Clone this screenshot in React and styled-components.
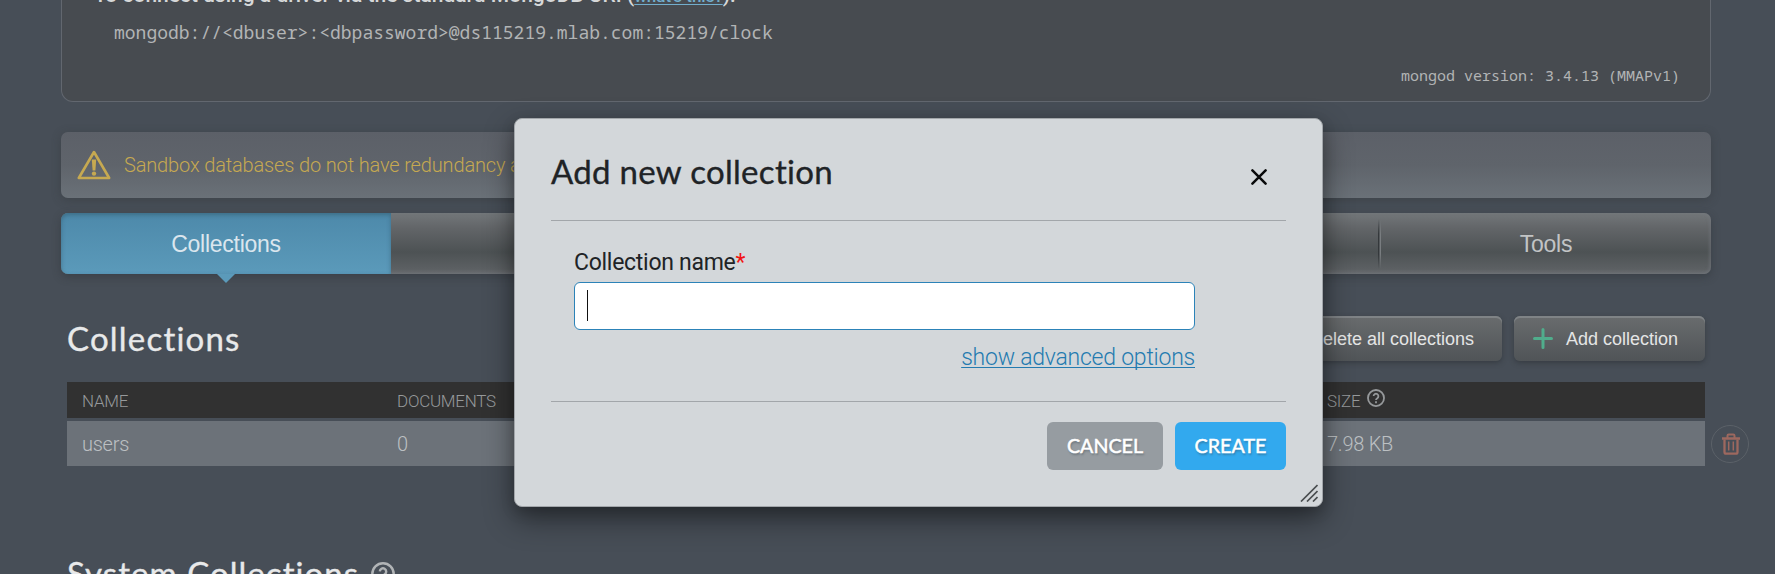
import React from "react";
import styled, { createGlobalStyle, css } from "styled-components";

const GlobalStyle = createGlobalStyle`
  * { box-sizing: border-box; }
  html, body { margin: 0; height: 574px; overflow: hidden; background: #474e57; }
  body { font-family: Roboto, "Liberation Sans", sans-serif; color: #dcdedf; }
`;

const Page = styled.main`
  height: 574px;
  padding: 0 64px 0 61px;
  overflow: hidden;
  display: flex;
  flex-direction: column;
  background: #474e57;
`;

const ConnectPanel = styled.section`
  flex: none;
  height: 102px;
  border: 1px solid #62676f;
  border-top: 0;
  border-radius: 0 0 12px 12px;
  background: #474b50;
  padding: 0 30px 0 32px;
  font-weight: 500;
`;

const Hint = styled.p`
  margin: -19px 0 0;
  height: 31px;
  line-height: 28px;
  font-size: 21px;
  white-space: nowrap;
  color: #d6d8d9;
`;

const HintLink = styled.a`
  color: #72aecd;
  font-size: 17px;
  text-decoration: underline;
  text-decoration-thickness: 1px;
  text-underline-offset: 2px;
`;

const Code = styled.code`
  display: block;
  font-family: "Droid Sans Mono", "Noto Sans Mono", "DejaVu Sans Mono", monospace;
  font-weight: 400;
  font-size: ${(p) => (p.$small ? 15 : 18)}px;
  line-height: 24px;
  color: #b2b4b5;
  white-space: nowrap;
  ${(p) => (p.$small ? css`text-align: right; margin-top: 19px;` : css`margin: 8px 0 0 20px;`)}
`;

const Alert = styled.section`
  flex: none;
  margin-top: 30px;
  height: 66px;
  border-radius: 7px;
  padding: 0 16px;
  display: flex;
  align-items: center;
  gap: 13px;
  background: linear-gradient(#5c6068, #5f646b 50%, #6a7178);
  box-shadow: 0 2px 10px rgba(50, 55, 58, 0.45);
  color: #c6a951;
  font-size: 20px;
  font-weight: 300;
  letter-spacing: -0.15px;
  white-space: nowrap;
`;

const Tabs = styled.nav`
  flex: none;
  margin-top: 15px;
  height: 61px;
  display: grid;
  grid-template-columns: repeat(5, 1fr);
  border-radius: 7px;
  background: linear-gradient(#73777a, #626568 25%, #4d5254 64%, #5c6063 92%, #6b6f74);
  box-shadow: 0 3px 8px rgba(40, 44, 48, 0.4), inset -2px 0 3px rgba(115, 120, 125, 0.5);
`;

const Tab = styled.div`
  position: relative;
  display: flex;
  align-items: center;
  justify-content: center;
  padding-top: 2px;
  font-family: "Liberation Sans", Arial, sans-serif;
  font-size: 23px;
  letter-spacing: -0.25px;
  color: #c2c4c5;
  ${(p) => p.$divider && css`
    &::before {
      content: "";
      position: absolute;
      left: -3px;
      top: 6px;
      bottom: 5px;
      width: 3px;
      background: linear-gradient(90deg, #34383b 0 1px, #55595c 1px 2px, #797d80 2px);
      mask-image: linear-gradient(transparent, #000 30%, #000 70%, transparent);
    }
  `}
  ${(p) => p.$active && css`
    color: #dbe6ee;
    border-radius: 7px 0 0 7px;
    background: linear-gradient(#4d89aa, #5b9aba);
    box-shadow: inset 0 2px 4px rgba(50, 90, 110, 0.6);
    &::after {
      content: "";
      position: absolute;
      top: 100%;
      left: 156px;
      border: 9px solid transparent;
      border-top-color: #5b9aba;
      border-bottom: 0;
    }
  `}
`;

const SectionHead = styled.header`
  flex: none;
  margin: 42px 6px 0;
  height: 45px;
  display: flex;
  align-items: center;
  gap: 12px;
`;

const Heading = styled.h2`
  margin: -1px 0 0;
  font-family: Lato, "Open Sans", sans-serif;
  font-weight: 400;
  font-size: 33px;
  line-height: 40px;
  letter-spacing: ${(p) => p.$spacing ?? 1.2}px;
  -webkit-text-stroke: 0.35px currentColor;
  white-space: nowrap;
  color: #e8e9ea;
`;

const ToolButton = styled.button`
  width: ${(p) => p.$width}px;
  height: 45px;
  padding: 2px 27px 0 19px;
  border: 0;
  border-radius: 6px;
  display: flex;
  align-items: center;
  justify-content: space-between;
  background: linear-gradient(#696c6e, #505457);
  box-shadow: inset 0 2px 0 #7f8386, 0 2px 5px rgba(40, 44, 48, 0.5);
  font-family: "Liberation Sans", Arial, sans-serif;
  font-size: 18px;
  white-space: nowrap;
  color: #e4e5e5;
  &:first-of-type { margin-left: auto; padding-right: 28px; }
  svg { margin-top: -2px; }
`;

const Table = styled.section`
  flex: none;
  margin: 21px 6px 0;
  width: 1638px;
  display: grid;
  grid-template-columns: 1638px;
  row-gap: 3px;
`;

const Row = styled.div`
  display: grid;
  grid-template-columns: 315px 930px 1fr;
  align-items: center;
  padding-left: 15px;
  height: ${(p) => (p.$head ? 36 : 45)}px;
  background: ${(p) => (p.$head ? "#313131" : "#6c7279")};
  color: ${(p) => (p.$head ? "#96999b" : "#bcc0c3")};
  font-size: ${(p) => (p.$head ? 17 : 20)}px;
  letter-spacing: -0.25px;
  font-weight: 300;
`;

const Cell = styled.span`
  display: flex;
  align-items: center;
  gap: 6px;
  padding-top: 2px;
  svg { margin: -7px 0 0 1px; }
`;

const RowWrap = styled.div`
  display: flex;
  align-items: center;
  gap: 6px;
  width: 1682px;
  ${Row} { flex: none; width: 1638px; }
  ${Cell} { padding-top: 1px; }
`;

const TrashButton = styled.button`
  flex: none;
  width: 38px;
  height: 38px;
  padding: 0 0 0 2px;
  border: 1px solid #5b6168;
  border-radius: 50%;
  background: transparent;
  color: #9d685f;
  display: grid;
  place-items: center;
`;

const SystemHead = styled.div`
  flex: none;
  margin: 88px 6px 0;
  display: flex;
  align-items: center;
  gap: 12px;
  color: #b1b4b6;
`;

const Dialog = styled.div`
  position: absolute;
  left: 514px;
  top: 118px;
  width: 809px;
  height: 389px;
  padding: 0 36px;
  display: flex;
  flex-direction: column;
  border: 1px solid #a2a6aa;
  border-radius: 8px;
  background: #d3d7da;
  box-shadow: 0 12px 30px rgba(0, 0, 0, 0.45), 0 5px 14px rgba(0, 0, 0, 0.15);
  color: #202326;
`;

const DialogHead = styled.header`
  height: 102px;
  display: flex;
  align-items: center;
  justify-content: space-between;
  padding: 14px 19px 0 0;
  border-bottom: 1px solid #a2a6aa;
  ${Heading} { color: #202326; margin-top: -12px; }
`;

const Form = styled.div`
  height: 181px;
  padding: 29px 91px 0 23px;
  display: flex;
  flex-direction: column;
  border-bottom: 1px solid #a2a6aa;
`;

const Label = styled.label`
  font-size: 23px;
  line-height: 26px;
  letter-spacing: -0.28px;
  margin-bottom: 6px;
`;

const Required = styled.span`
  color: #f01414;
`;

const Field = styled.div`
  height: 48px;
  border: 1px solid #2c83b8;
  border-radius: 6px;
  background: #fff;
  padding: 0 12px;
  display: flex;
  align-items: center;
`;

const Caret = styled.span`
  width: 1px;
  height: 31px;
  margin-top: -1px;
  background: #111;
`;

const AdvancedLink = styled.a`
  align-self: flex-end;
  margin-top: 13px;
  font-size: 23px;
  line-height: 30px;
  letter-spacing: -0.23px;
  font-weight: 300;
  color: #247bb0;
  text-decoration: underline;
  text-decoration-thickness: 1px;
  text-underline-offset: 2px;
  text-decoration-skip-ink: none;
`;

const Actions = styled.footer`
  margin-top: 20px;
  display: flex;
  justify-content: flex-end;
  gap: 12px;
`;

const ActionButton = styled.button`
  width: ${(p) => p.$width}px;
  height: 48px;
  padding: 0 0 2px;
  border: 0;
  border-radius: 6px;
  background: ${(p) => (p.$primary ? "#32a9ee" : "#969ca1")};
  color: #fff;
  font-family: Lato, "Open Sans", sans-serif;
  font-size: 19.7px;
  font-weight: 400;
  letter-spacing: 0;
  -webkit-text-stroke: 0.5px #fff;
  text-shadow: 1px 2px 2px rgba(50, 65, 75, 0.4);
`;

const Grip = styled.span`
  position: absolute;
  right: 4px;
  bottom: 4px;
  line-height: 0;
`;

const HelpIcon = ({ size }) => (
  <svg width={size} height={size} viewBox="0 0 24 24" fill="none" stroke="currentColor" strokeWidth="2.4">
    <circle cx="12" cy="12" r="10.7" />
    <path d="M8.8 9.4a3.2 3.2 0 1 1 5 2.8c-1.2.8-1.8 1.3-1.8 2.5" />
    <path d="M12 16.4v2.6" />
  </svg>
);

const WarningIcon = () => (
  <svg width="34" height="30" viewBox="0 0 34 30" fill="none" stroke="currentColor" strokeWidth="2.6" strokeLinejoin="round">
    <path d="M17 2 L32.2 28 H1.8 Z" />
    <path d="M14.8 9.5h4.4l-.8 11h-2.8z" fill="currentColor" stroke="none" />
    <circle cx="17" cy="23.6" r="2.2" fill="currentColor" stroke="none" />
  </svg>
);

const PlusIcon = () => (
  <svg width="20" height="21" viewBox="0 0 20 21" stroke="#50ad8c" strokeWidth="3" strokeLinecap="round">
    <path d="M10 1.5v18M1.5 10.5h17" />
  </svg>
);

const TrashIcon = ({ color = "currentColor" }) => (
  <svg width="18" height="22" viewBox="0 0 18 22" fill="none" stroke={color}>
    <path d="M5.5 5V2.8c0-.8.5-1.3 1.2-1.3h4.6c.7 0 1.2.5 1.2 1.3V5" strokeWidth="2" />
    <path d="M.5 5.5h17" strokeWidth="2.4" strokeLinecap="round" />
    <path d="M2.5 6.5V19c0 1 .7 1.7 1.7 1.7h9.6c1 0 1.7-.7 1.7-1.7V6.5" strokeWidth="2.3" />
    <path d="M6.7 8.5v9M11.3 8.5v9" strokeWidth="1.5" />
  </svg>
);

const CloseIcon = () => (
  <svg width="16" height="16" viewBox="0 0 16 16" stroke="#08090a" strokeWidth="2.5" strokeLinecap="round">
    <path d="M1.4 1.4 14.6 14.6M14.6 1.4 1.4 14.6" />
  </svg>
);

export default function App() {
  return (
    <>
      <GlobalStyle />
      <Page>
        <ConnectPanel>
          <Hint>
            To connect using a driver via the standard MongoDB URI (<HintLink>what's this?</HintLink>):
          </Hint>
          <Code>mongodb://&lt;dbuser&gt;:&lt;dbpassword&gt;@ds115219.mlab.com:15219/clock</Code>
          <Code $small>mongod version: 3.4.13 (MMAPv1)</Code>
        </ConnectPanel>

        <Alert>
          <WarningIcon />
          <span>Sandbox databases do not have redundancy and therefore are not suitable for production.</span>
        </Alert>

        <Tabs>
          <Tab $active>Collections</Tab>
          <Tab>Users</Tab>
          <Tab $divider>Stats</Tab>
          <Tab $divider>Backups</Tab>
          <Tab $divider>Tools</Tab>
        </Tabs>

        <SectionHead>
          <Heading>Collections</Heading>
          <ToolButton $width={236}>
            <TrashIcon color="#b0746b" />
            Delete all collections
          </ToolButton>
          <ToolButton $width={191}>
            <PlusIcon />
            Add collection
          </ToolButton>
        </SectionHead>

        <Table>
          <Row $head>
            <Cell>NAME</Cell>
            <Cell>DOCUMENTS</Cell>
            <Cell>
              SIZE <HelpIcon size={18} />
            </Cell>
          </Row>
          <RowWrap>
            <Row>
              <Cell>users</Cell>
              <Cell>0</Cell>
              <Cell>7.98 KB</Cell>
            </Row>
            <TrashButton aria-label="Delete users">
              <TrashIcon />
            </TrashButton>
          </RowWrap>
        </Table>

        <SystemHead>
          <Heading $spacing={1.05}>System Collections</Heading>
          <HelpIcon size={24} />
        </SystemHead>
      </Page>

      <Dialog role="dialog">
        <DialogHead>
          <Heading $spacing={0.3}>Add new collection</Heading>
          <CloseIcon />
        </DialogHead>
        <Form>
          <Label>
            Collection name<Required>*</Required>
          </Label>
          <Field>
            <Caret />
          </Field>
          <AdvancedLink>show advanced options</AdvancedLink>
        </Form>
        <Actions>
          <ActionButton $width={116}>CANCEL</ActionButton>
          <ActionButton $width={111} $primary>CREATE</ActionButton>
        </Actions>
        <Grip>
          <svg width="18" height="18" viewBox="0 0 18 18" stroke="#4a4e50" strokeWidth="1.7">
            <path d="M1 17.5 17.5 1M7 17.5 17.5 7M13 17.5 17.5 13" />
          </svg>
        </Grip>
      </Dialog>
    </>
  );
}
